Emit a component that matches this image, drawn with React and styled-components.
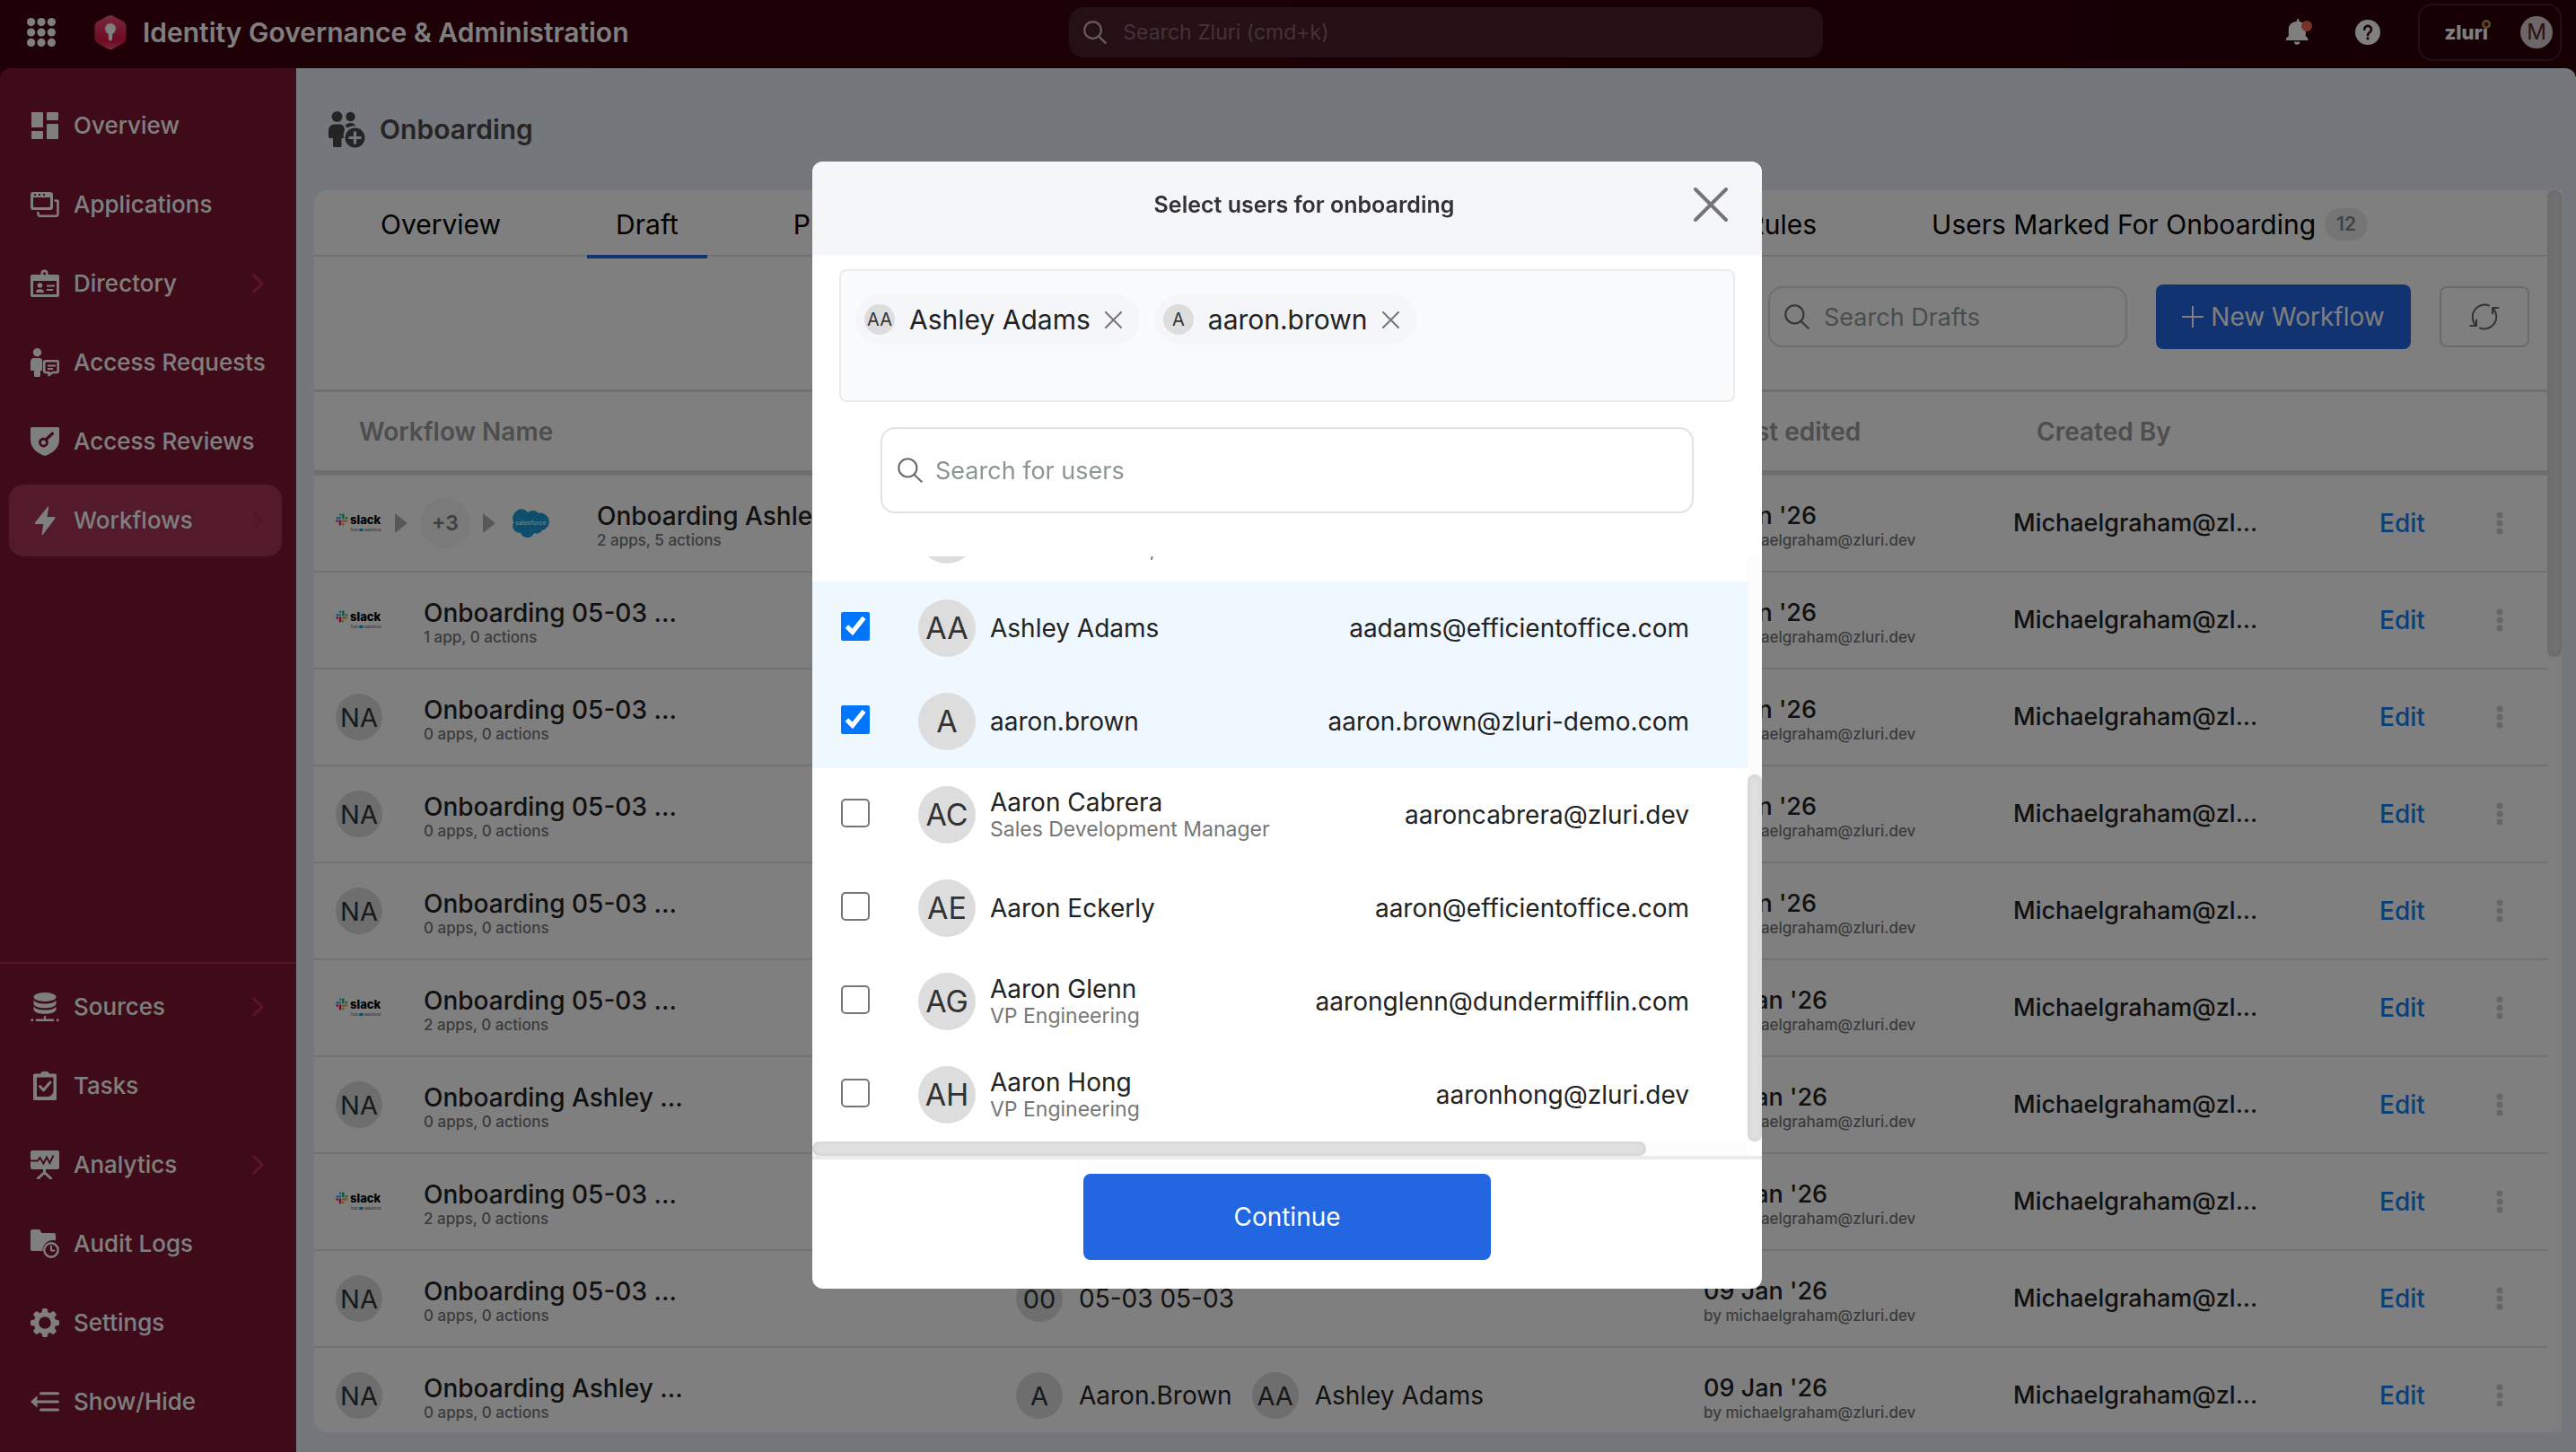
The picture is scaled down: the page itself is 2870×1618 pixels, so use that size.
import React from "react";
import styled, { createGlobalStyle, css } from "styled-components";

const GlobalStyle = createGlobalStyle`
  *, *::before, *::after { box-sizing: border-box; }
  body {
    margin: 0;
    background: #2c0009;
    color: #222;
    font-family: Inter, "Liberation Sans", sans-serif;
    font-size: 28px;
    line-height: 32px;
  }
  button, input { font: inherit; color: inherit; }
  button { border: 0; padding: 0; background: none; cursor: pointer; }
  a { color: inherit; text-decoration: none; }
  svg { display: block; flex: none; }
`;

/* ---------- shell ---------- */

const Shell = styled.div`
  display: flex;
  flex-direction: column;
  height: 100vh;
  background: linear-gradient(90deg, #40000f, #2c0009);
`;

const TopBar = styled.header`
  display: grid;
  grid-template-columns: 24fr 840px 17fr;
  align-items: center;
  height: 76px;
  padding: 0 16px 4px 30px;
  color: #fff;
`;

const Brand = styled.div`
  display: flex;
  align-items: center;
  font-size: 30px;
  font-weight: 600;
  white-space: nowrap;
`;

const BrandLogo = styled.div`
  margin: 0 18px 0 43px;
`;

const GlobalSearch = styled.label`
  display: flex;
  align-items: center;
  gap: 18px;
  height: 56px;
  padding: 0 16px;
  border-radius: 16px;
  background: #4a222b;
  color: #c4b4b8;
`;

const PlainInput = styled.input`
  flex: 1;
  min-width: 0;
  height: 100%;
  padding: 0;
  border: 0;
  outline: 0;
  background: transparent;
  font-size: ${(p) => p.$size || 27}px;
  &::placeholder {
    color: ${(p) => p.$placeholder || "#8b9691"};
    opacity: 1;
  }
`;

const TopActions = styled.div`
  display: flex;
  align-items: center;
  justify-content: flex-end;
`;

const IconButton = styled.button`
  display: grid;
  place-items: center;
  margin-right: ${(p) => p.$after || 0}px;
`;

const Account = styled.button`
  display: flex;
  align-items: center;
  justify-content: flex-end;
  gap: 36px;
  width: 160px;
  height: 64px;
  padding: 0 8px;
  border: 2px solid #44202a;
  border-radius: 16px;
`;

const Wordmark = styled.span`
  position: relative;
  font-size: 22px;
  line-height: 28px;
  font-weight: 800;
`;

const WordmarkRing = styled.i`
  position: absolute;
  top: 0;
  right: -3px;
  width: 10px;
  height: 10px;
  border-radius: 50%;
  background: radial-gradient(#6b1020 30%, #f2a33c 45%, #3fa36b 75%);
`;

const Body = styled.div`
  flex: 1;
  min-height: 0;
  display: flex;
  overflow: hidden;
  border-radius: 12px 12px 0 0;
`;

/* ---------- sidebar ---------- */

const Sidebar = styled.nav`
  display: flex;
  flex-direction: column;
  justify-content: space-between;
  width: 330px;
  flex: none;
  background: #801632;
  color: #fff;
`;

const NavGroup = styled.div`
  display: flex;
  flex-direction: column;
  gap: 8px;
  padding: 24px 16px 0 10px;
  ${(p) =>
    p.$bottom &&
    css`
      padding: 8px 16px 16px 10px;
      border-top: 2px solid #b02c54;
    `}
`;

const NavItem = styled.a`
  display: flex;
  align-items: center;
  gap: 16px;
  height: 80px;
  padding: 0 20px 0 24px;
  border-radius: 16px;
  background: ${(p) => (p.$active ? "#a43454" : "transparent")};
  font-size: 26px;
  font-weight: 500;
  white-space: nowrap;
`;

const NavLabel = styled.span`
  flex: 1;
`;

/* ---------- main page ---------- */

const Main = styled.main`
  flex: 1;
  min-width: 0;
  display: flex;
  flex-direction: column;
  padding: 0 16px 22px 20px;
  background: #e8eef8;
`;

const PageTitle = styled.div`
  display: flex;
  align-items: center;
  gap: 16px;
  height: 136px;
  padding-left: 16px;
`;

const PageHeading = styled.h1`
  margin: 0;
  font-size: 30px;
  font-weight: 600;
  color: #4a4a4a;
`;

const Card = styled.section`
  flex: 1;
  min-height: 0;
  display: flex;
  overflow: hidden;
  border-radius: 16px 0 0 16px;
  background: #fff;
`;

const CardContent = styled.div`
  flex: 1;
  min-width: 0;
`;

const Scrollbar = styled.div`
  width: 16px;
  flex: none;
  background: #fcfcfc;
`;

const ScrollThumb = styled.div`
  border-radius: 8px;
  background: #e0e0e0;
  box-shadow: inset 0 0 6px rgba(0, 0, 0, 0.08);
`;

const PageThumb = styled(ScrollThumb)`
  height: 520px;
`;

const Tabs = styled.div`
  display: flex;
  justify-content: space-between;
  height: 74px;
  padding: 0 168px 0 42px;
  border-bottom: 2px solid #dbe4ee;
`;

const TabGroup = styled.div`
  display: flex;
  gap: 64px;
`;

const Tab = styled.button`
  display: flex;
  align-items: center;
  gap: 10px;
  height: 76px;
  padding: 4px 32px 0;
  border-bottom: 4px solid ${(p) => (p.$active ? "#2266e2" : "transparent")};
  color: #000;
  font-size: 30px;
  white-space: nowrap;
`;

const Count = styled.span`
  padding: 2px 13px;
  border-radius: 18px;
  background: #ebebeb;
  color: #858585;
  font-size: 21px;
  font-weight: 600;
`;

const Toolbar = styled.div`
  display: flex;
  align-items: center;
  justify-content: flex-end;
  gap: 32px;
  height: 151px;
  padding: 0 20px 14px;
  border-bottom: 3px solid #dcdcdc;
`;

const DraftSearch = styled.label`
  display: flex;
  align-items: center;
  gap: 16px;
  width: 400px;
  height: 68px;
  padding: 0 16px;
  border: 2px solid #dcdcdc;
  border-radius: 16px;
  color: #6a6a6a;
`;

const PrimaryButton = styled.button`
  display: flex;
  align-items: center;
  justify-content: center;
  gap: 8px;
  width: ${(p) => p.$width}px;
  height: ${(p) => p.$height}px;
  border-radius: 8px;
  background: #2266e2;
  color: #fff;
  white-space: nowrap;
`;

const RefreshButton = styled.button`
  display: grid;
  place-items: center;
  width: 100px;
  height: 68px;
  border: 2px solid #d4d4d4;
  border-radius: 8px;
`;

/* ---------- workflow table ---------- */

const Table = styled.table`
  width: 100%;
  table-layout: fixed;
  border-collapse: separate;
  border-spacing: 0;
`;

const Col = styled.col`
  width: ${(p) => (p.$w ? `${p.$w}px` : "auto")};
`;

const HeadCell = styled.th`
  height: 93px;
  padding: 0 0 0 50px;
  border-bottom: 6px solid #dcdcdc;
  color: #9c9c9c;
  font-size: 28px;
  font-weight: 600;
  text-align: left;
`;

const Cell = styled.td`
  height: 108px;
  padding: 0 0 0 24px;
  border-bottom: 2px solid #dbe4ee;
  white-space: nowrap;
`;

const Inline = styled.div`
  display: flex;
  align-items: center;
  gap: ${(p) => p.$gap}px;
`;

const Stack = styled.div`
  padding-top: 4px;
`;

const Avatar = styled.span`
  display: grid;
  place-items: center;
  flex: none;
  width: ${(p) => p.$size}px;
  height: ${(p) => p.$size}px;
  border-radius: 50%;
  background: ${(p) => p.$bg || "#ddd"};
  color: ${(p) => p.$color || "#333"};
  font-size: ${(p) => p.$font}px;
  font-weight: ${(p) => p.$weight || 400};
  line-height: 1;
`;

const Primary = styled.div`
  font-size: ${(p) => p.$size || 27}px;
  line-height: 34px;
  font-weight: 500;
`;

const Secondary = styled.div`
  color: #777;
  font-size: 17px;
  line-height: 20px;
  font-weight: 500;
`;

const EditLink = styled.a`
  color: #1080f4;
  font-weight: 500;
  font-size: 28px;
`;

/* ---------- modal ---------- */

const Overlay = styled.div`
  position: fixed;
  inset: 0;
  display: flex;
  align-items: center;
  justify-content: center;
  padding: 0 2px 2px 0;
  background: rgba(0, 0, 0, 0.5);
`;

const Dialog = styled.div`
  width: 1058px;
  max-width: 100%;
  overflow: hidden;
  border-radius: 12px;
  background: #fff;
`;

const DialogHeader = styled.header`
  display: flex;
  align-items: center;
  height: 104px;
  padding: 0 38px 8px 114px;
  background: #f5f6fa;
`;

const DialogTitle = styled.h2`
  flex: 1;
  margin: 0;
  text-align: center;
  color: #333;
  font-size: 25px;
  font-weight: 600;
`;

const ChipBox = styled.div`
  display: flex;
  align-items: flex-start;
  gap: 16px;
  height: 148px;
  margin: 16px 30px 28px;
  padding: 26px 16px;
  border: 2px solid #ebebeb;
  border-radius: 8px;
  background: #fafbfd;
`;

const Chip = styled.div`
  display: flex;
  align-items: center;
  gap: 16px;
  height: 56px;
  padding: 0 20px 0 10px;
  border-radius: 28px;
  background: #f5f6fa;
  font-size: 30px;
`;

const UserSearch = styled.label`
  display: flex;
  align-items: center;
  gap: 14px;
  height: 96px;
  margin: 0 76px 48px;
  padding: 0 17px;
  border: 2px solid #e2e2e2;
  border-radius: 16px;
  color: #6a6a6a;
`;

const ListArea = styled.div`
  display: flex;
  height: 652px;
`;

const UserList = styled.ul`
  flex: 1;
  min-width: 0;
  display: flex;
  flex-direction: column;
  justify-content: flex-end;
  margin: 0;
  padding: 0;
  overflow: hidden;
  list-style: none;
`;

const ListTrack = styled(Scrollbar)`
  display: flex;
  flex-direction: column;
  justify-content: flex-end;
`;

const ListThumb = styled(ScrollThumb)`
  height: 409px;
`;

const SideTrack = styled.div`
  height: 16px;
  margin-right: 16px;
  background: #fcfcfc;
`;

const SideThumb = styled(ScrollThumb)`
  width: 929px;
  height: 16px;
`;

const UserRow = styled.label`
  display: flex;
  align-items: center;
  height: 104px;
  padding: 0 65px 0 32px;
  background: ${(p) => (p.$selected ? "#eff7ff" : "#fff")};
  cursor: pointer;
`;

const Check = styled.input`
  width: 32px;
  height: 32px;
  margin: 0 54px 4px 0;
  &:not(:checked) {
    appearance: none;
    border: 2px solid #767676;
    border-radius: 5px;
    background: #fff;
  }
`;

const UserText = styled.span`
  display: flex;
  flex-direction: column;
  flex: 1;
  margin-left: 16px;
`;

const UserRole = styled.span`
  color: #777;
  font-size: 23px;
  line-height: 28px;
`;

const DialogFooter = styled.footer`
  display: flex;
  justify-content: center;
  padding: 16px 0 32px;
  border-top: 4px solid #ebebeb;
`;

/* ---------- icons ---------- */

const Svg = ({ size = 32, children, ...rest }) => (
  <svg width={size} height={size} viewBox="0 0 32 32" fill="currentColor" aria-hidden="true" {...rest}>
    {children}
  </svg>
);

const line = { fill: "none", stroke: "currentColor", strokeLinecap: "round", strokeLinejoin: "round" };

const AppsIcon = () => (
  <Svg>
    {[4.6, 16, 27.4].map((y) => [4.6, 16, 27.4].map((x) => <circle key={`${x}-${y}`} cx={x} cy={y} r="4.6" />))}
  </Svg>
);

const ShieldLogo = () => (
  <svg width="36" height="40" viewBox="0 0 36 40" aria-hidden="true">
    <defs>
      <linearGradient id="shieldFill" x1="0" y1="0" x2="0" y2="1">
        <stop offset="0" stopColor="#f0527c" />
        <stop offset="0.75" stopColor="#dc1444" />
        <stop offset="1" stopColor="#f05078" />
      </linearGradient>
    </defs>
    <path fill="url(#shieldFill)" d="M15 1.8a6 6 0 0 1 6 0l11.500 6.200a6 6 0 0 1 3 5.200v13.600a6 6 0 0 1-3 5.200L21 38.200a6 6 0 0 1-6 0L3.500 32a6 6 0 0 1-3-5.200V13.200A6 6 0 0 1 3.500 8z" />
    <circle cx="18" cy="16" r="6" fill="#fff" />
    <path d="M15.500 20h5l-.5 7.500a2 2 0 0 1-4 0z" fill="#fff" />
  </svg>
);

const SearchIcon = ({ size = 28, w = 2.4 }) => (
  <Svg size={size} {...line} strokeWidth={w}>
    <circle cx="13" cy="13" r="11.500" />
    <path d="M21 21.500 30.500 30.500" />
  </Svg>
);

const BellIcon = () => (
  <svg width="30" height="30" viewBox="0 0 30 30" aria-hidden="true">
    <path fill="#fff" d="M13 1.200a1.200 1.200 0 0 1 2.400 0v1.600c4.500.8 7.400 4.200 7.400 9v7.400l2.600 2.600V24H1v-2.200l2.800-2.600v-7.400c0-4.800 3-8.200 9.200-9zM10 25.500h6.400a3.200 3.200 0 0 1-6.400 0z" />
    <circle cx="24" cy="8" r="6" fill="#f0644c" />
  </svg>
);

const HelpIcon = () => (
  <svg width="28" height="28" viewBox="0 0 28 28" aria-hidden="true">
    <circle cx="14" cy="14" r="14" fill="#fff" />
    <path d="M10.200 10.800a3.900 3.900 0 1 1 5.900 3.300c-1.500.9-2.100 1.500-2.100 3.100" fill="none" stroke="#2c0009" strokeWidth="2.600" strokeLinecap="round" />
    <circle cx="14" cy="20.800" r="1.600" fill="#2c0009" />
  </svg>
);

const OverviewIcon = () => (
  <Svg>
    <rect x="1" y="1" width="13" height="17" rx="1" />
    <rect x="18" y="1" width="13" height="9" rx="1" />
    <rect x="1" y="22" width="13" height="9" rx="1" />
    <rect x="18" y="14" width="13" height="17" rx="1" />
  </Svg>
);

const ApplicationsIcon = () => (
  <Svg>
    <path fillRule="evenodd" d="M3 2h19a3 3 0 0 1 3 3v14a3 3 0 0 1-3 3H3a3 3 0 0 1-3-3V5a3 3 0 0 1 3-3zm0 6v10a1 1 0 0 0 1 1h17a1 1 0 0 0 1-1V8zM4 4v2h2V4zm5 0v2h2V4zm5 0v2h2V4z" />
    <path d="M27.500 11.500h1.800a1.200 1.200 0 0 1 1.200 1.200V26a2.800 2.800 0 0 1-2.800 2.800H11a2.500 2.500 0 0 1-2.500-2.500V25" {...line} strokeWidth="2.600" />
  </Svg>
);

const DirectoryIcon = () => (
  <Svg>
    <path fillRule="evenodd" d="M2 6h9.500V4.500a4 4 0 0 1 8 0V6H30a2 2 0 0 1 2 2v21a2 2 0 0 1-2 2H2a2 2 0 0 1-2-2V8a2 2 0 0 1 2-2zm1 7v15h26V13zm12.500-9.800a1.600 1.600 0 1 0 0 3.200 1.600 1.600 0 0 0 0-3.200z" />
    <circle cx="10.500" cy="18" r="2.800" />
    <path d="M6 26c0-3 2-3.800 4.500-3.800S15 23 15 26zM18 17.500h9v2h-9zM18 22h7v2h-7z" />
  </Svg>
);

const RequestsIcon = () => (
  <Svg>
    <circle cx="7.500" cy="4.700" r="4.700" />
    <path d="M4 11h6c2 0 3.200 1.500 3.200 3.500V25H11v5.500a1.500 1.500 0 0 1-1.500 1.500h-4A1.500 1.500 0 0 1 4 30.500V25H0V15.500C0 13 1.500 11 4 11z" />
    <path d="M16.500 14.200h13a1.200 1.200 0 0 1 1.200 1.200v10.400a1.200 1.200 0 0 1-1.200 1.200h-5L20.500 30v-3h-4a1.200 1.200 0 0 1-1.200-1.200V15.400a1.200 1.200 0 0 1 1.200-1.200z" {...line} strokeWidth="2.600" />
    <path d="M19 18.500h9v2h-9zM19 22h6v2h-6z" />
  </Svg>
);

const ReviewsIcon = () => (
  <Svg>
    <path d="M1.500 0h29A1.500 1.500 0 0 1 32 1.500V14c0 8.500-6.500 15-16 18C6.500 29 0 22.500 0 14V1.500A1.500 1.500 0 0 1 1.500 0z" />
    <circle cx="14.500" cy="17" r="4" fill="none" stroke="#801632" strokeWidth="2.800" />
    <path d="m17 14 7.500-7" stroke="#801632" strokeWidth="3.200" strokeLinecap="round" />
  </Svg>
);

const BoltIcon = () => (
  <Svg>
    <path d="M19.500.3 4.800 18.500 5.300 20h9L12.500 32l1 .2L27.500 13.500 27 12h-8.500l1.800-11.500z" />
  </Svg>
);

const SourcesIcon = () => (
  <Svg>
    <ellipse cx="16" cy="5" rx="12.500" ry="5" />
    <path d="M3.500 8.500c2 3 7 4 12.500 4s10.500-1 12.500-4v4c-1 3.500-6.500 4.700-12.500 4.700S4.500 16 3.500 12.500z" />
    <path d="M3.500 15.500c2 3 7 4 12.500 4s10.500-1 12.500-4V19c-1 3.500-6.500 4.700-12.500 4.700S4.500 22.500 3.500 19z" />
    <path d="M15 26h2v3.500h8a1.200 1.200 0 0 1 0 2.500H7a1.200 1.200 0 0 1 0-2.500h8z" />
    <circle cx="1.800" cy="30.700" r="1.500" />
    <circle cx="30.200" cy="30.700" r="1.500" />
  </Svg>
);

const TasksIcon = () => (
  <Svg>
    <path fillRule="evenodd" d="M5 2.500h6a5.500 5.500 0 0 1 10 0h6.500A1.500 1.500 0 0 1 29 4v26.500a1.500 1.500 0 0 1-1.500 1.500H4.500A1.500 1.500 0 0 1 3 30.500V4a1.500 1.500 0 0 1 1.500-1.500zM7 6.500V28h13c3-.5 5-3 5.500-6V6.500z" />
    <path d="m10.500 16.500 4 4.200L22 12" {...line} strokeWidth="3" />
  </Svg>
);

const AnalyticsIcon = () => (
  <Svg>
    <rect width="32" height="21" rx="2" />
    <path d="M0 11.500h8L10.500 8l4 6.500L18 7.500l3.500 6.500 4-8.500" fill="none" stroke="#801632" strokeWidth="1.900" />
    <path d="M15.500 21v3.500L8.500 31M15.500 24.500l7 6.500" {...line} strokeWidth="3" />
  </Svg>
);

const AuditIcon = () => (
  <Svg>
    <path d="M2 0h8l2.500 4H26a2 2 0 0 1 2 2v6.500c-8-2-14.500 4-14.500 11.500H2a2 2 0 0 1-2-2V2a2 2 0 0 1 2-2z" />
    <circle cx="23" cy="23" r="7.700" {...line} strokeWidth="2.400" />
    <path d="M23 18.500V23.500h3.500" {...line} strokeWidth="2" />
  </Svg>
);

const SettingsIcon = () => (
  <Svg>
    {[0, 45, 90, 135].map((a) => (
      <rect key={a} x="12.800" y="0" width="6.400" height="32" rx="2" transform={`rotate(${a} 16 16)`} />
    ))}
    <circle cx="16" cy="16" r="12.300" />
    <circle cx="16" cy="16" r="6.800" fill="#801632" />
  </Svg>
);

const ShowHideIcon = () => (
  <Svg>
    <path d="M11.500 6.800H30.500M7 16H30.500M11.500 25H30.500" {...line} strokeWidth="3" />
    <path d="M7.500 9.300v13.400L0 16z" />
  </Svg>
);

const Chevron = ({ color }) => (
  <svg width="13" height="22" viewBox="0 0 13 22" stroke={color} strokeWidth="3" fill="none" strokeLinecap="round" strokeLinejoin="round" aria-hidden="true">
    <path d="M2 2 11 11 2 20" />
  </svg>
);

const OnboardIcon = () => (
  <svg width="41" height="41" viewBox="0 0 41 41" fill="#484848" aria-hidden="true">
    <circle cx="9.500" cy="6" r="6" />
    <circle cx="24.500" cy="6" r="5.200" />
    <path d="M7 14.500h5.500c3.500 0 5.500 2.500 5.500 6.500-1.500 3-1.500 6-1 9h-2.500v8.500A1.500 1.500 0 0 1 13 40H6.500A1.500 1.500 0 0 1 5 38.500V30H2a2 2 0 0 1-2-2v-6c0-4.500 2.500-7.500 7-7.500z" />
    <path d="M18.500 16c1.500-2 3.500-3 6-3s4.500 1 5.500 3c-3.500.3-6.500 1-9 2.500-.8-1-1.500-1.800-2.500-2.500z" />
    <circle cx="29.500" cy="29.500" r="11" />
    <path d="M29.500 22.500v14M22.500 29.500h14" stroke="#e8eef8" strokeWidth="3.200" />
  </svg>
);

const CloseIcon = ({ size, w }) => (
  <svg width={size} height={size} viewBox={`0 0 ${size} ${size}`} stroke="#757575" strokeWidth={w} strokeLinecap="round" aria-hidden="true">
    <path d={`M${w / 2} ${w / 2} ${size - w / 2} ${size - w / 2}M${size - w / 2} ${w / 2} ${w / 2} ${size - w / 2}`} />
  </svg>
);

const PlusIcon = () => (
  <svg width="24" height="24" viewBox="0 0 24 24" stroke="currentColor" strokeWidth="2" aria-hidden="true">
    <path d="M12 0v24M0 12h24" />
  </svg>
);

const RefreshIcon = () => (
  <svg width="34" height="32" viewBox="0 0 34 32" fill="none" stroke="#666" strokeWidth="2" strokeLinecap="round" strokeLinejoin="round" aria-hidden="true">
    <path d="M22 3.500A13.500 13.500 0 0 0 7 25M1.500 26H8V19.500M12 28.500A13.500 13.500 0 0 0 27 7M32.500 6H26v6.500" />
  </svg>
);

const PlayArrow = () => (
  <svg width="14" height="22" viewBox="0 0 14 22" fill="#b0b0b0" aria-hidden="true">
    <path d="M0 0 14 11 0 22z" />
  </svg>
);

const DotsIcon = () => (
  <svg width="8" height="26" viewBox="0 0 8 26" fill="#ccc" aria-hidden="true">
    <circle cx="4" cy="4" r="3.500" />
    <circle cx="4" cy="13" r="3.500" />
    <circle cx="4" cy="22" r="3.500" />
  </svg>
);

const SlackLogo = () => (
  <svg width="52" height="22" viewBox="0 0 52 22" role="img" aria-label="Slack">
    <g strokeWidth="2.600" strokeLinecap="round">
      <path d="M1.500 5.200h3.500M5.200 1.500v.2" stroke="#36c5f0" />
      <path d="M8.300 1.500v3.700M11.800 5.200h.2" stroke="#2eb67d" />
      <path d="M8.300 8.500h3.700M8.300 12v.2" stroke="#ecb22e" />
      <path d="M5 8.500v3.700M1.500 8.500h.2" stroke="#e01e5a" />
    </g>
    <text x="16" y="12" fontFamily="Inter, sans-serif" fontSize="13" fontWeight="800" fill="#000">slack</text>
    <text x="16.500" y="20" fontFamily="Inter, sans-serif" fontSize="4" fill="#444">from</text>
    <ellipse cx="28.500" cy="18.500" rx="2.400" ry="1.700" fill="#00a1e0" />
    <text x="31.500" y="20" fontFamily="Inter, sans-serif" fontSize="3.800" fill="#444">Salesforce</text>
  </svg>
);

const SalesforceLogo = () => (
  <svg width="47" height="34" viewBox="-4 -1 47 34" role="img" aria-label="Salesforce">
    <path fill="#1a9cd8" d="M18 4a8.500 8.500 0 0 1 12 .8 9.500 9.500 0 1 1 4 19.200 7 7 0 0 1-9 3 8 8 0 0 1-15-.5 7.500 7.500 0 0 1-7.500-11.500A8.500 8.500 0 0 1 4 4a8.500 8.500 0 0 1 14 0z" />
    <text x="21.500" y="17.500" textAnchor="middle" fontFamily="Inter, sans-serif" fontSize="7" fill="#fff">salesforce</text>
  </svg>
);

/* ---------- data ---------- */

const topNav = [
  ["Overview", OverviewIcon],
  ["Applications", ApplicationsIcon],
  ["Directory", DirectoryIcon, true],
  ["Access Requests", RequestsIcon],
  ["Access Reviews", ReviewsIcon],
  ["Workflows", BoltIcon, true],
];

const bottomNav = [
  ["Sources", SourcesIcon, true],
  ["Tasks", TasksIcon],
  ["Analytics", AnalyticsIcon, true],
  ["Audit Logs", AuditIcon],
  ["Settings", SettingsIcon],
  ["Show/Hide", ShowHideIcon],
];

const batch = [["00", "05-03 05-03"]];
const pair = [["A", "Aaron.Brown"], ["AA", "Ashley Adams"]];

const workflows = [
  { icon: "chain", name: "Onboarding Ashley ...", meta: "2 apps, 5 actions", users: pair, date: "11 Jan '26" },
  { icon: "slack", name: "Onboarding 05-03 ...", meta: "1 app, 0 actions", users: batch, date: "11 Jan '26" },
  { icon: "na", name: "Onboarding 05-03 ...", meta: "0 apps, 0 actions", users: batch, date: "11 Jan '26" },
  { icon: "na", name: "Onboarding 05-03 ...", meta: "0 apps, 0 actions", users: batch, date: "11 Jan '26" },
  { icon: "na", name: "Onboarding 05-03 ...", meta: "0 apps, 0 actions", users: batch, date: "11 Jan '26" },
  { icon: "slack", name: "Onboarding 05-03 ...", meta: "2 apps, 0 actions", users: batch, date: "09 Jan '26" },
  { icon: "na", name: "Onboarding Ashley ...", meta: "0 apps, 0 actions", users: pair, date: "09 Jan '26" },
  { icon: "slack", name: "Onboarding 05-03 ...", meta: "2 apps, 0 actions", users: batch, date: "09 Jan '26" },
  { icon: "na", name: "Onboarding 05-03 ...", meta: "0 apps, 0 actions", users: batch, date: "09 Jan '26" },
  { icon: "na", name: "Onboarding Ashley ...", meta: "0 apps, 0 actions", users: pair, date: "09 Jan '26" },
];

const people = [
  { initials: "AB", name: "Ashley Bell", role: "Finance Director, West", email: "abell@zluri.dev" },
  { initials: "AA", name: "Ashley Adams", email: "aadams@efficientoffice.com", selected: true },
  { initials: "A", name: "aaron.brown", email: "aaron.brown@zluri-demo.com", selected: true },
  { initials: "AC", name: "Aaron Cabrera", role: "Sales Development Manager", email: "aaroncabrera@zluri.dev" },
  { initials: "AE", name: "Aaron Eckerly", email: "aaron@efficientoffice.com" },
  { initials: "AG", name: "Aaron Glenn", role: "VP Engineering", email: "aaronglenn@dundermifflin.com" },
  { initials: "AH", name: "Aaron Hong", role: "VP Engineering", email: "aaronhong@zluri.dev" },
];

/* ---------- composed parts ---------- */

function NavList({ items, active }) {
  return items.map(([label, Icon, expandable]) => (
    <NavItem key={label} href="#" $active={label === active}>
      <Icon />
      <NavLabel>{label}</NavLabel>
      {expandable && <Chevron color={label === active ? "#a82850" : "#b82c58"} />}
    </NavItem>
  ));
}

function WorkflowIcon({ kind }) {
  if (kind === "na") return <Avatar $size={52} $font={29}>NA</Avatar>;
  if (kind === "slack") return <SlackLogo />;
  return (
    <Inline $gap={14}>
      <SlackLogo />
      <PlayArrow />
      <Avatar $size={56} $font={23} $bg="#f4f4f4" $color="#7e7e7e" $weight={600}>+3</Avatar>
      <PlayArrow />
      <SalesforceLogo />
    </Inline>
  );
}

function WorkflowRow({ row }) {
  return (
    <tr>
      <Cell>
        <Inline $gap={row.icon === "chain" ? 52 : 46}>
          <WorkflowIcon kind={row.icon} />
          <Stack>
            <Primary $size={28}>{row.name}</Primary>
            <Secondary>{row.meta}</Secondary>
          </Stack>
        </Inline>
      </Cell>
      <Cell>
        <Inline $gap={22}>
          {row.users.map(([initials, name]) => (
            <Inline key={name} $gap={18}>
              <Avatar $size={52} $font={29}>{initials}</Avatar>
              {name}
            </Inline>
          ))}
        </Inline>
      </Cell>
      <Cell>
        <Stack>
          <Primary>{row.date}</Primary>
          <Secondary>by michaelgraham@zluri.dev</Secondary>
        </Stack>
      </Cell>
      <Cell><Primary>Michaelgraham@zl...</Primary></Cell>
      <Cell><EditLink href="#">Edit</EditLink></Cell>
      <Cell><IconButton aria-label="More actions"><DotsIcon /></IconButton></Cell>
    </tr>
  );
}

function UserPicker() {
  return (
    <Overlay>
      <Dialog role="dialog" aria-modal="true" aria-labelledby="picker-title">
        <DialogHeader>
          <DialogTitle id="picker-title">Select users for onboarding</DialogTitle>
          <IconButton aria-label="Close"><CloseIcon size={38} w={4} /></IconButton>
        </DialogHeader>
        <ChipBox>
          {people.filter((p) => p.selected).map((p) => (
            <Chip key={p.name}>
              <Avatar $size={34} $font={20}>{p.initials}</Avatar>
              {p.name}
              <IconButton aria-label={`Remove ${p.name}`}><CloseIcon size={19} w={2} /></IconButton>
            </Chip>
          ))}
        </ChipBox>
        <UserSearch>
          <SearchIcon />
          <PlainInput type="text" aria-label="Search for users" placeholder="Search for users" />
        </UserSearch>
        <ListArea>
          <UserList>
            {people.map((p) => (
              <li key={p.name}>
                <UserRow $selected={p.selected}>
                  <Check type="checkbox" defaultChecked={p.selected} />
                  <Avatar $size={64} $font={34}>{p.initials}</Avatar>
                  <UserText>
                    {p.name}
                    {p.role && <UserRole>{p.role}</UserRole>}
                  </UserText>
                  <span>{p.email}</span>
                </UserRow>
              </li>
            ))}
          </UserList>
          <ListTrack><ListThumb /></ListTrack>
        </ListArea>
        <SideTrack><SideThumb /></SideTrack>
        <DialogFooter>
          <PrimaryButton $width={454} $height={96}>Continue</PrimaryButton>
        </DialogFooter>
      </Dialog>
    </Overlay>
  );
}

export default function App() {
  return (
    <>
      <GlobalStyle />
      <Shell>
        <TopBar>
          <Brand>
            <IconButton aria-label="Apps"><AppsIcon /></IconButton>
            <BrandLogo><ShieldLogo /></BrandLogo>
            Identity Governance &amp; Administration
          </Brand>
          <GlobalSearch>
            <SearchIcon size={26} w={3} />
            <PlainInput type="text" aria-label="Search Zluri" placeholder="Search Zluri (cmd+k)" $size={23} $placeholder="#84686f" />
          </GlobalSearch>
          <TopActions>
            <IconButton aria-label="Notifications" $after={48}><BellIcon /></IconButton>
            <IconButton aria-label="Help" $after={42}><HelpIcon /></IconButton>
            <Account>
              <Wordmark>zluri<WordmarkRing /></Wordmark>
              <Avatar $size={36} $font={24} $bg="#d8ccd0" $color="#54202f">M</Avatar>
            </Account>
          </TopActions>
        </TopBar>
        <Body>
          <Sidebar>
            <NavGroup><NavList items={topNav} active="Workflows" /></NavGroup>
            <NavGroup $bottom><NavList items={bottomNav} /></NavGroup>
          </Sidebar>
          <Main>
            <PageTitle>
              <OnboardIcon />
              <PageHeading>Onboarding</PageHeading>
            </PageTitle>
            <Card>
              <CardContent>
                <Tabs>
                  <TabGroup>
                    <Tab>Overview</Tab>
                    <Tab $active>Draft</Tab>
                    <Tab>Playbooks</Tab>
                    <Tab>Runs</Tab>
                  </TabGroup>
                  <TabGroup>
                    <Tab>Automation Rules</Tab>
                    <Tab>Users Marked For Onboarding <Count>12</Count></Tab>
                  </TabGroup>
                </Tabs>
                <Toolbar>
                  <DraftSearch>
                    <SearchIcon />
                    <PlainInput type="text" aria-label="Search Drafts" placeholder="Search Drafts" $placeholder="#939b98" />
                  </DraftSearch>
                  <PrimaryButton $width={284} $height={72}><PlusIcon />New Workflow</PrimaryButton>
                  <RefreshButton aria-label="Refresh"><RefreshIcon /></RefreshButton>
                </Toolbar>
                <Table>
                  <colgroup>
                    <Col $w={758} />
                    <Col />
                    <Col $w={345} />
                    <Col $w={408} />
                    <Col $w={130} />
                    <Col $w={81} />
                  </colgroup>
                  <thead>
                    <tr>
                      <HeadCell>Workflow Name</HeadCell>
                      <HeadCell>Users</HeadCell>
                      <HeadCell>Last edited</HeadCell>
                      <HeadCell>Created By</HeadCell>
                      <HeadCell />
                      <HeadCell />
                    </tr>
                  </thead>
                  <tbody>
                    {workflows.map((row, i) => <WorkflowRow key={i} row={row} />)}
                  </tbody>
                </Table>
              </CardContent>
              <Scrollbar><PageThumb /></Scrollbar>
            </Card>
          </Main>
        </Body>
      </Shell>
      <UserPicker />
    </>
  );
}
